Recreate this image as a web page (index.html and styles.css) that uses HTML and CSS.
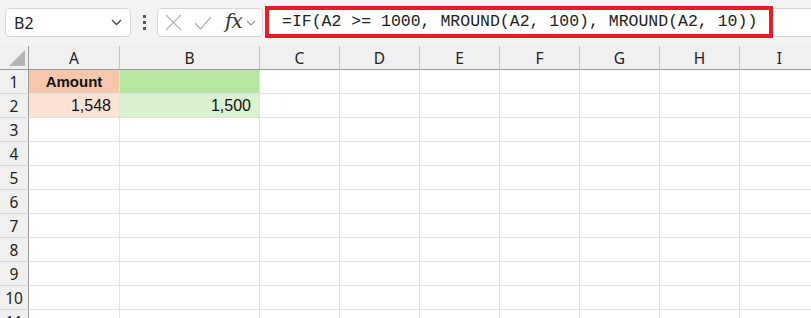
FILE: index.html
```html
<!DOCTYPE html>
<html lang="en">
<head>
    <meta charset="UTF-8">
    <meta name="viewport" content="width=device-width, initial-scale=1.0">
    <title>MROUND formula</title>
    <link rel="stylesheet" href="styles.css">
</head>
<body>
    <div class="toolbar">
        <div class="namebox">
            <span>B2</span>
            <svg class="chev" width="11" height="7" viewBox="0 0 11 7"><path d="M1 1 L5.5 5.5 L10 1" fill="none" stroke="#444" stroke-width="1.3"/></svg>
        </div>
        <div class="dots"><i></i><i></i><i></i></div>
        <div class="fxbox">
            <svg width="17" height="17" viewBox="0 0 17 17"><path d="M1 1 L16 16 M16 1 L1 16" fill="none" stroke="#b5b5b5" stroke-width="1.3"/></svg>
            <svg width="18" height="14" viewBox="0 0 18 14"><path d="M1 7 L6.5 13 L17 1" fill="none" stroke="#b5b5b5" stroke-width="1.3"/></svg>
            <span class="fx">fx</span>
            <svg width="10" height="6" viewBox="0 0 10 6"><path d="M1 1 L5 5 L9 1" fill="none" stroke="#999" stroke-width="1.2"/></svg>
        </div>
        <div class="formula">
            <div class="highlight">=IF(A2 &gt;= 1000, MROUND(A2, 100), MROUND(A2, 10))</div>
        </div>
    </div>

    <div class="sheet">
        <div class="corner"><div class="tri"></div></div>
        <div class="colhead">A</div>
        <div class="colhead">B</div>
        <div class="colhead">C</div>
        <div class="colhead">D</div>
        <div class="colhead">E</div>
        <div class="colhead">F</div>
        <div class="colhead">G</div>
        <div class="colhead">H</div>
        <div class="colhead">I</div>

        <div class="rowhead">1</div>
        <div class="cell peach label">Amount</div>
        <div class="cell green"></div>
        <div class="cell"></div><div class="cell"></div><div class="cell"></div><div class="cell"></div><div class="cell"></div><div class="cell"></div><div class="cell"></div>

        <div class="rowhead">2</div>
        <div class="cell peach-light num">1,548</div>
        <div class="cell green-light num">1,500</div>
        <div class="cell"></div><div class="cell"></div><div class="cell"></div><div class="cell"></div><div class="cell"></div><div class="cell"></div><div class="cell"></div>
    </div>

    <script>
        // empty rows 3 to 11
        const sheet = document.querySelector('.sheet');
        for (let r = 3; r <= 11; r++) {
            const head = document.createElement('div');
            head.className = 'rowhead';
            head.textContent = r;
            sheet.appendChild(head);
            for (let c = 0; c < 9; c++) {
                const cell = document.createElement('div');
                cell.className = 'cell';
                sheet.appendChild(cell);
            }
        }
    </script>
</body>
</html>
```

FILE: styles.css
```css
body {
    margin: 0;
    width: 811px;
    height: 318px;
    overflow: hidden;
    background-color: #fff;
    font-family: "Noto Sans", Arial, sans-serif;
    color: #222;
}
.toolbar {
    height: 46px;
    box-sizing: border-box;
    background-color: #f3f3f3;
    display: flex;
    align-items: flex-start;
    padding: 8px 0 0 5px;
}
.namebox {
    width: 126px;
    height: 29px;
    box-sizing: border-box;
    background-color: #fff;
    border: 1px solid #d6d6d6;
    border-radius: 5px;
    display: flex;
    align-items: center;
    justify-content: space-between;
    padding: 0 8px 0 8px;
    font-size: 16px;
}
.dots {
    margin-left: 12px;
    width: 3px;
    height: 29px;
    display: flex;
    flex-direction: column;
    justify-content: center;
    gap: 3px;
}
.dots i {
    display: block;
    width: 3px;
    height: 3px;
    background-color: #555;
}
.fxbox {
    margin-left: 11px;
    width: 106px;
    height: 29px;
    box-sizing: border-box;
    background-color: #fff;
    border: 1px solid #d6d6d6;
    border-radius: 5px;
    display: flex;
    align-items: center;
    padding: 0 0 0 7px;
}
.fxbox svg:nth-child(2) {
    margin-left: 12px;
}
.fx {
    margin-left: 13px;
    font-family: "DejaVu Serif", "Liberation Serif", serif;
    font-style: italic;
    font-size: 20px;
    color: #333;
    line-height: 1;
    margin-top: -3px;
    letter-spacing: -1px;
}
.fxbox svg:last-child {
    margin-left: 4px;
}
.formula {
    margin-left: 3px;
    flex: 1;
    height: 29px;
    margin-right: -20px;
    box-sizing: border-box;
    background-color: #fff;
    border: 1px solid #d6d6d6;
    border-left: none;
}
.highlight {
    width: 508px;
    height: 32px;
    box-sizing: border-box;
    margin: -3px 0 0 -1px;
    border: 4px solid #e81c24;
    padding-left: 13px;
    font-family: "Liberation Mono", "Courier New", monospace;
    font-size: 16.5px;
    line-height: 24px;
    color: #222;
    white-space: nowrap;
}
.sheet {
    display: grid;
    grid-template-columns: 29px 91px 140px repeat(7, 80px);
    grid-auto-rows: 24px;
}
.corner {
    background-color: #f0f0f0;
    border-right: 1px solid #9a9a9a;
    border-bottom: 1px solid #9a9a9a;
    display: flex;
    align-items: flex-end;
    justify-content: flex-end;
    padding: 0 3px 3px 0;
}
.tri {
    width: 16px;
    height: 16px;
    background-color: #b4b4b4;
    clip-path: polygon(100% 0, 100% 100%, 0 100%);
}
.colhead {
    background-color: #f0f0f0;
    border-right: 1px solid #c4c4c4;
    border-bottom: 1px solid #9a9a9a;
    display: flex;
    align-items: center;
    justify-content: center;
    font-size: 15.5px;
}
.rowhead {
    background-color: #f0f0f0;
    border-right: 1px solid #9a9a9a;
    border-bottom: 1px solid #d9d9d9;
    display: flex;
    align-items: center;
    justify-content: center;
    font-size: 15.5px;
}
.cell {
    border-right: 1px solid #e1e1e1;
    border-bottom: 1px solid #e1e1e1;
    display: flex;
    align-items: center;
    font-family: "Liberation Sans", Arial, sans-serif;
    font-size: 16px;
    color: #111;
}
.label {
    justify-content: center;
    font-weight: bold;
    font-size: 15px;
}
.num {
    justify-content: flex-end;
    padding-right: 8px;
}
.peach {
    background-color: #f7c7ac;
}
.peach-light {
    background-color: #fbe2d5;
}
.green {
    background-color: #b5e6a2;
}
.green-light {
    background-color: #daf2d0;
}
```
